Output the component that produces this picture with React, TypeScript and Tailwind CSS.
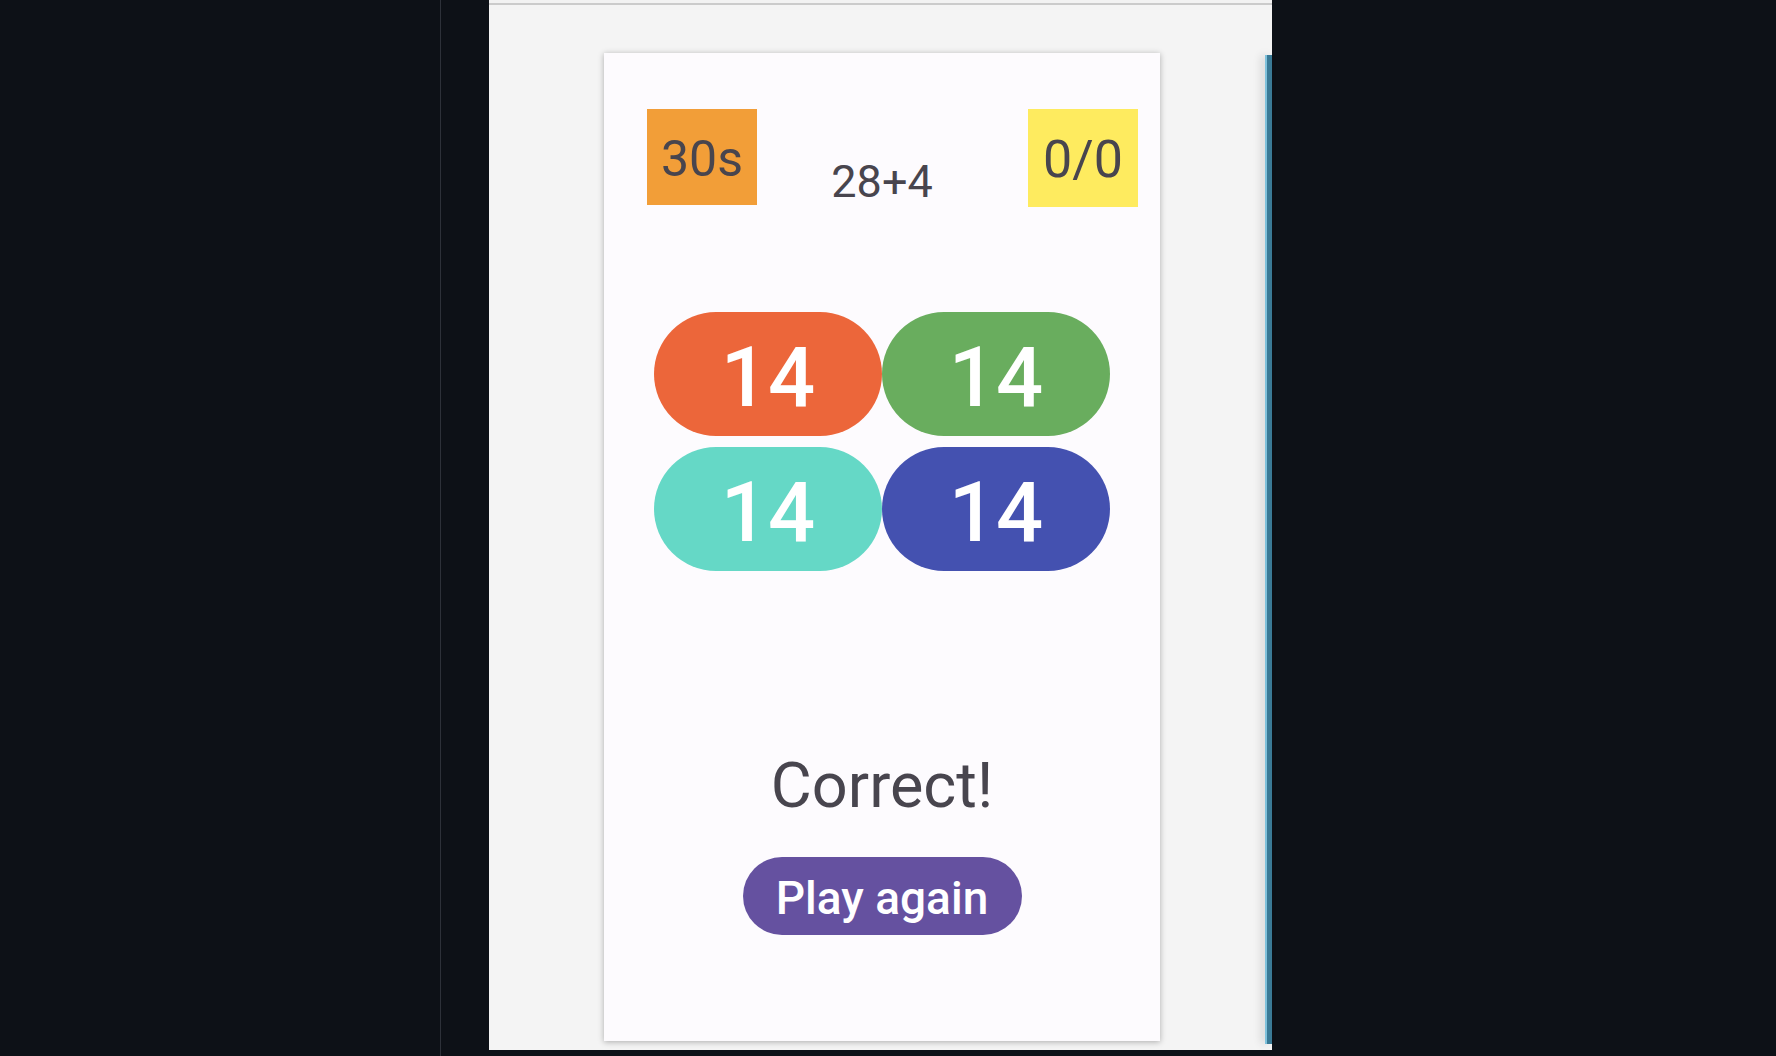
export default function App() {
  const pills = [
    { bg: "bg-[#ec663a]" },
    { bg: "bg-[#69ad5e]" },
    { bg: "bg-[#65d8c6]" },
    { bg: "bg-[#4451b0]" },
  ];
  return (
    <div
      className="flex w-[1776px] h-[1056px] bg-[#0d1117] overflow-hidden"
      style={{ fontFamily: "Roboto, 'Noto Sans', sans-serif" }}
    >
      <div className="w-[440px] shrink-0" />
      <div className="w-px h-full bg-[#2d3139] shrink-0" />
      <div className="w-[48px] shrink-0" />
      <div className="w-[783px] h-[1050px] shrink-0 bg-[#f4f4f4] flex flex-col">
        <div className="h-[3px] bg-[#f2f2f2]" />
        <div className="h-[2px] bg-[#cbcbcb]" />
        <div className="flex flex-1 pt-[48px] pl-[115px]">
          <div className="w-[556px] h-[988px] bg-[#fdfbfe] shadow-[0_1px_6px_rgba(0,0,0,0.3)] flex flex-col items-center text-[#48454e]">
            <div className="w-full grid grid-cols-[1fr_auto_1fr] mt-[56px] h-[98px]">
              <div className="flex justify-start pl-[43px]">
                <div className="w-[110px] h-[96px] bg-[#f29e38] flex items-center justify-center pt-[4px] text-[50px] leading-none">
                  30s
                </div>
              </div>
              <div className="text-[45px] leading-none mt-[50px]">28+4</div>
              <div className="flex justify-end pr-[22px]">
                <div className="w-[110px] h-[98px] bg-[#feeb5f] flex items-center justify-center pt-[4px] text-[52px] leading-none">
                  0/0
                </div>
              </div>
            </div>
            <div className="grid grid-cols-[228px_228px] gap-y-[11px] mt-[105px]">
              {pills.map((p, i) => (
                <div
                  key={i}
                  className={`${p.bg} h-[124px] rounded-full flex items-center justify-center pt-[6px] text-white text-[83px] font-medium leading-none`}
                >
                  14
                </div>
              ))}
            </div>
            <div className="mt-[183px] text-[63px] leading-none">Correct!</div>
            <div className="mt-[40px] w-[279px] h-[78px] rounded-full bg-[#6551a0] flex items-center justify-center pt-[3px] text-white text-[46px] font-medium leading-none">
              Play again
            </div>
          </div>
          <div className="flex-1" />
          <div className="w-[7px] h-[989px] mt-[2px] border-l-2 border-[#7fc2dc] bg-[#3a7a96] shadow-[-4px_0_8px_rgba(0,0,0,0.12)]" />
        </div>
      </div>
    </div>
  );
}
